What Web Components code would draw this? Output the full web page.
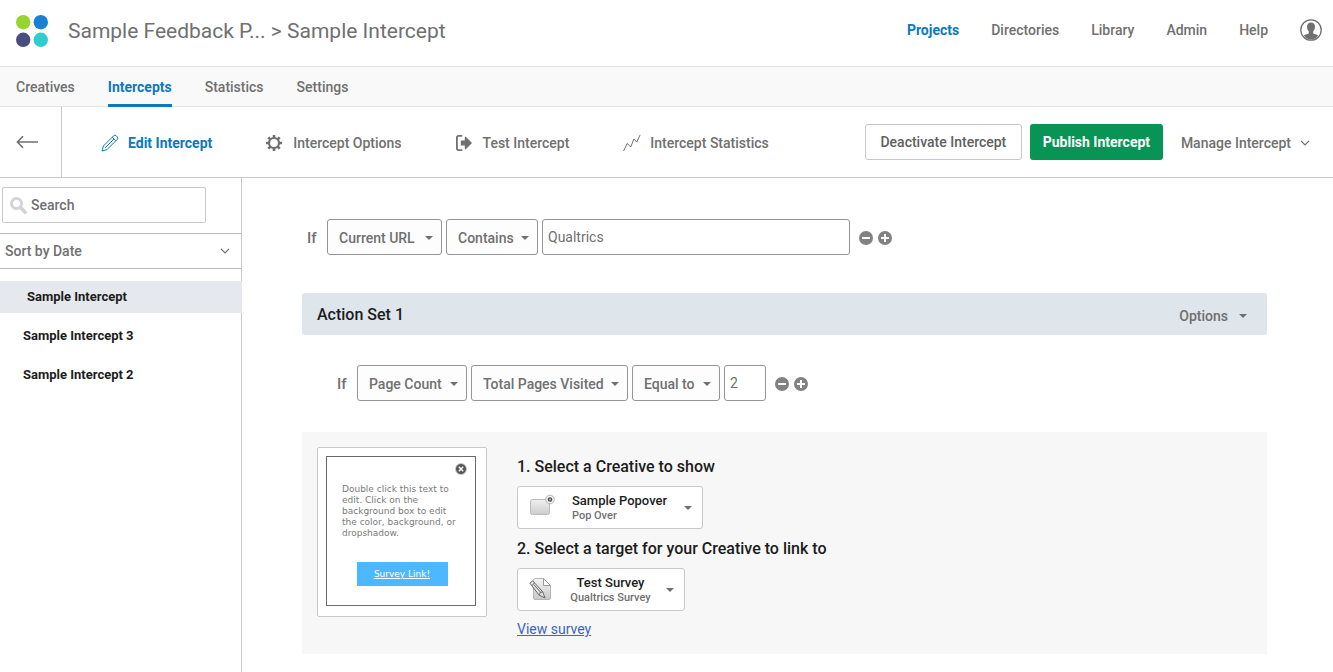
<!DOCTYPE html>
<html lang="en">
<head>
<meta charset="utf-8">
<meta name="viewport" content="width=device-width, initial-scale=1">
<title>Sample Intercept</title>
<style>
  body {
    margin: 0;
    min-height: 100vh;
    display: flex;
    flex-direction: column;
    background: #fff;
    color: #707070;
    font: 500 14px/20px Roboto, "Liberation Sans", sans-serif;
  }

  .workspace {
    flex: 1;
    display: flex;
  }

  main {
    flex: 1;
    min-width: 0;
    padding: 41px 66px 18px 60px;
  }
</style>
</head>
<body>
<app-header project="Sample Feedback P..." intercept="Sample Intercept"></app-header>
<app-tabs></app-tabs>
<intercept-toolbar></intercept-toolbar>
<div class="workspace">
  <intercept-list></intercept-list>
  <main>
    <condition-row>
      <drop-select label="Condition type" value="Current URL" style="--width: 115px"></drop-select>
      <drop-select label="Operator" value="Contains" style="--width: 92px"></drop-select>
      <value-input label="URL value" value="Qualtrics" style="--width: 308px"></value-input>
    </condition-row>
    <action-set name="Action Set 1">
      <condition-row slot="condition">
        <drop-select label="Condition type" value="Page Count" style="--width: 110px"></drop-select>
        <drop-select label="Metric" value="Total Pages Visited" style="--width: 157px"></drop-select>
        <drop-select label="Operator" value="Equal to" style="--width: 88px"></drop-select>
        <value-input label="Page count" value="2" style="--width: 42px"></value-input>
      </condition-row>
      <creative-preview slot="preview"></creative-preview>
      <asset-picker heading="1. Select a Creative to show" name="Sample Popover" kind="Pop Over" icon="popover" style="--width: 186px"></asset-picker>
      <asset-picker heading="2. Select a target for your Creative to link to" name="Test Survey" kind="Qualtrics Survey" icon="survey" style="--width: 168px"></asset-picker>
    </action-set>
  </main>
</div>

<script>
const ICONS = {
  logo: [32, 32, `
    <circle cx="7.2" cy="7.2" r="7.2" fill="#96d52f"/>
    <circle cx="24.8" cy="7.2" r="7.2" fill="#1a80d3"/>
    <circle cx="7.2" cy="24.8" r="7.2" fill="#474f80"/>
    <circle cx="24.8" cy="24.8" r="7.2" fill="#31ccd1"/>`],
  user: [22, 22, `
    <circle cx="11" cy="11" r="10.2" fill="none" stroke="currentColor" stroke-width="1.3"/>
    <path fill="currentColor" d="M11 3.6c2.6 0 4 1.7 4 4.2 0 2.3-.8 3.7-1.8 4.7v1.9c2 .6 4.2 1.2 5 2.4A9.6 9.6 0 0 1 11 20.6a9.6 9.6 0 0 1-7.2-3.8c.8-1.2 3-1.8 5-2.4v-1.9C7.8 11.500 7 10.100 7 7.800c0-2.500 1.400-4.200 4-4.200z"/>`],
  back: [22, 14, `<path fill="none" stroke="currentColor" stroke-width="1.6" d="M7 1.2 1.400 7 7 12.800M1.400 7H22"/>`],
  pencil: [18, 18, `
    <path fill="none" stroke="currentColor" stroke-linejoin="round" d="M1 17l1.400-5L12.700 1.700a1.700 1.700 0 0 1 2.400 0l1.200 1.200a1.700 1.700 0 0 1 0 2.400L6 15.600zM11.200 3.200l3.600 3.600M4.200 13.800l8.800-8.800"/>`],
  gear: [16, 16, `
    <circle cx="8" cy="8" r="5" fill="none" stroke="currentColor" stroke-width="2.200"/>
    <path stroke="currentColor" stroke-width="2.600" d="M8 0v3M8 13v3M0 8h3M13 8h3M2.300 2.300l2.200 2.200M11.500 11.500l2.200 2.200M13.700 2.300l-2.200 2.200M4.500 11.500l-2.200 2.200"/>`],
  exit: [16, 16, `
    <path fill="none" stroke="currentColor" stroke-width="1.800" d="M6.200.9H2.400a1.500 1.500 0 0 0-1.500 1.500v11.200a1.500 1.500 0 0 0 1.500 1.500h3.800"/>
    <path fill="currentColor" d="M4.800 5.500h4V1.800h1L16 8l-6.200 6.200h-1v-3.700h-4z"/>`],
  chart: [18, 18, `<path fill="none" stroke="currentColor" stroke-linejoin="round" d="M.6 17 4.200 9.400 7.700 13l3.200-8 2.800 3L17.200.8"/>`],
  search: [17, 17, `
    <circle cx="6.500" cy="6.500" r="5" fill="none" stroke="#d3d3d3" stroke-width="3"/>
    <path stroke="#d3d3d3" stroke-width="3.400" stroke-linecap="round" d="M11 11l4.200 4.200"/>`],
  chevron: [10, 6, `<path fill="none" stroke="currentColor" stroke-width="1.200" d="M1 .8 5 4.900 9 .8"/>`],
  caret: [8, 4, `<path fill="currentColor" d="M0 0h8L4 4z"/>`],
  minus: [14, 14, `<circle cx="7" cy="7" r="7" fill="#828282"/><path fill="#fff" d="M3 6h8v2H3z"/>`],
  plus: [14, 14, `<circle cx="7" cy="7" r="7" fill="#828282"/><path fill="#fff" d="M3 6h3V3h2v3h3v2H8v3H6V8H3z"/>`],
  close: [12, 12, `
    <circle cx="6" cy="6" r="5.500" fill="#555" stroke="#ccc"/>
    <path stroke="#fff" stroke-width="1.400" d="M3.800 3.800l4.400 4.400M8.200 3.800 3.800 8.200"/>`],
  popover: [26, 28, `
    <defs><linearGradient id="g" x2="0" y2="1"><stop stop-color="#f0f0f0"/><stop offset="1" stop-color="#ccc"/></linearGradient></defs>
    <rect x="1.500" y="5.500" width="19" height="15" rx="2" fill="url(#g)" stroke="#bbb"/>
    <circle cx="21" cy="5.500" r="4.300" fill="#f2f2f2" stroke="#b5b5b5"/>
    <circle cx="21" cy="5.500" r="1.700" fill="#aaa" stroke="#555" stroke-width="1.300"/>`],
  survey: [24, 24, `
    <defs><linearGradient id="g" x2="0" y2="1"><stop stop-color="#f4f4f4"/><stop offset="1" stop-color="#c8c8c8"/></linearGradient></defs>
    <path fill="url(#g)" stroke="#b5b5b5" d="M6 .5h8.500l7 7V20a1.500 1.500 0 0 1-1.500 1.500H6A1.500 1.500 0 0 1 4.500 20V2A1.500 1.500 0 0 1 6 .5z"/>
    <path fill="#fff" stroke="#999" d="M14.500.5v7h7z"/>
    <path fill="#e4e4e4" stroke="#666" stroke-linejoin="round" d="M.9 5.200 3.600 2.800 13.700 13.800 16 20l-6-3zM3 7.400 5.600 5M10 17l1.200-2.400 2.500-.8M5 7l7 7.600"/>`],
};

const icon = (name) => {
  const [w, h, body] = ICONS[name];
  return `<svg class="icon" width="${w}" height="${h}" viewBox="0 0 ${w} ${h}" aria-hidden="true">${body}</svg>`;
};

const BASE = `
  :host { display: block; }
  * { box-sizing: border-box; }
  .icon { display: block; flex: none; }
  a { color: inherit; text-decoration: none; }
  button, input, select {
    margin: 0;
    padding: 0;
    border: 0;
    background: none;
    color: inherit;
    font: inherit;
  }
  button { cursor: pointer; }
`;

class BaseElement extends HTMLElement {
  connectedCallback() {
    if (this.shadowRoot) return;
    this.attachShadow({ mode: "open" });
    this.shadowRoot.innerHTML = `<style>${BASE}${this.styles()}</style>${this.template()}`;
  }

  attr(name) {
    return this.getAttribute(name) || "";
  }
}

class AppHeader extends BaseElement {
  styles() {
    return `
      header {
        display: flex;
        align-items: center;
        height: 67px;
        padding: 0 11px 4px 16px;
        border-bottom: 1px solid #e4e4e4;
      }
      h1 {
        flex: 1;
        margin: 0 0 0 20px;
        font-size: 21px;
        line-height: 28px;
        font-weight: 400;
        white-space: nowrap;
      }
      nav { display: flex; align-items: center; gap: 32px; padding-bottom: 2px; }
      .current { color: #0b79bf; font-weight: 700; }
    `;
  }

  template() {
    const links = ["Projects", "Directories", "Library", "Admin", "Help"];
    return `
      <header>
        ${icon("logo")}
        <h1>${this.attr("project")} &gt; ${this.attr("intercept")}</h1>
        <nav aria-label="Main">
          ${links.map((l, i) => `<a href="#" class="${i ? "" : "current"}">${l}</a>`).join("")}
          <button type="button" aria-label="Account">${icon("user")}</button>
        </nav>
      </header>
    `;
  }
}

class AppTabs extends BaseElement {
  styles() {
    return `
      nav {
        display: flex;
        gap: 33px;
        height: 40px;
        padding: 0 16px;
        background: #f9f9f9;
        border-bottom: 1px solid #e4e4e4;
      }
      a { height: 40px; line-height: 40px; }
      .current {
        color: #0b79bf;
        font-weight: 700;
        border-bottom: 3px solid #0b79bf;
      }
    `;
  }

  template() {
    const tabs = ["Creatives", "Intercepts", "Statistics", "Settings"];
    return `
      <nav aria-label="Section">
        ${tabs.map((t) => `<a href="#" class="${t === "Intercepts" ? "current" : ""}">${t}</a>`).join("")}
      </nav>
    `;
  }
}

class InterceptToolbar extends BaseElement {
  styles() {
    return `
      .bar {
        display: flex;
        align-items: center;
        height: 71px;
        border-bottom: 1px solid #c8c8c8;
        white-space: nowrap;
      }
      .back {
        display: flex;
        align-items: center;
        align-self: stretch;
        width: 62px;
        padding-left: 16px;
        border-right: 1px solid #c8c8c8;
      }
      nav { flex: 1; display: flex; gap: 54px; padding: 2px 0 0 39px; }
      nav a { display: flex; align-items: center; gap: 9px; }
      .art { width: 18px; }
      .current { color: #0b79bf; font-weight: 700; }
      .actions { display: flex; align-items: center; gap: 8px; }
      .actions button { height: 36px; border-radius: 3px; }
      .outline { width: 157px; border: 1px solid #c8c8c8; color: #606060; }
      .publish { width: 133px; background: #079455; color: #fff; font-weight: 700; }
      .menu { display: flex; align-items: center; gap: 9px; padding: 2px 23px 0 10px; }
    `;
  }

  template() {
    return `
      <div class="bar">
        <a class="back" href="#" aria-label="Back">${icon("back")}</a>
        <nav aria-label="Intercept">
          <a href="#" class="current"><span class="art">${icon("pencil")}</span>Edit Intercept</a>
          <a href="#"><span class="art">${icon("gear")}</span>Intercept Options</a>
          <a href="#"><span class="art">${icon("exit")}</span>Test Intercept</a>
          <a href="#"><span class="art">${icon("chart")}</span>Intercept Statistics</a>
        </nav>
        <div class="actions">
          <button type="button" class="outline">Deactivate Intercept</button>
          <button type="button" class="publish">Publish Intercept</button>
          <button type="button" class="menu" aria-haspopup="menu">Manage Intercept${icon("chevron")}</button>
        </div>
      </div>
    `;
  }
}

class InterceptList extends BaseElement {
  styles() {
    return `
      :host { flex: none; width: 242px; box-sizing: border-box; border-right: 1px solid #c8c8c8; }
      .search {
        display: flex;
        align-items: center;
        gap: 4px;
        height: 36px;
        margin: 9px 35px 10px 2px;
        padding: 0 7px;
        border: 1px solid #c8c8c8;
        border-radius: 2px;
      }
      input { flex: 1; min-width: 0; outline: 0; }
      input::placeholder { color: inherit; opacity: 1; }
      .sort {
        display: grid;
        align-items: center;
        height: 36px;
        border: solid #b9b9b9;
        border-width: 1px 0;
      }
      .sort > * { grid-area: 1 / 1; }
      .sort .icon { justify-self: end; margin-right: 11px; pointer-events: none; }
      select { appearance: none; width: 100%; height: 34px; padding: 0 5px; }
      ul {
        display: grid;
        gap: 7px;
        margin: 12px -1px 0 0;
        padding: 0;
        list-style: none;
        color: #1c1c1c;
        font-size: 13px;
        font-weight: 700;
      }
      li a { display: block; padding: 0 23px; line-height: 32px; }
      .selected { padding-left: 27px; background: #e5e8ed; }
    `;
  }

  template() {
    return `
      <label class="search">${icon("search")}<input type="text" placeholder="Search" aria-label="Search"></label>
      <div class="sort">
        <select aria-label="Sort order"><option>Sort by Date</option></select>
        ${icon("chevron")}
      </div>
      <ul>
        <li><a href="#" class="selected">Sample Intercept</a></li>
        <li><a href="#">Sample Intercept 3</a></li>
        <li><a href="#">Sample Intercept 2</a></li>
      </ul>
    `;
  }
}

class DropSelect extends BaseElement {
  styles() {
    return `
      :host { width: var(--width); }
      div { display: grid; align-items: center; }
      div > * { grid-area: 1 / 1; }
      select {
        appearance: none;
        width: 100%;
        height: 36px;
        padding: 2px 11px 0;
        border: 1px solid #959595;
        border-radius: 3px;
        background: #fdfdfd;
      }
      .icon { justify-self: end; margin: 2px 9px 0 0; pointer-events: none; }
    `;
  }

  template() {
    return `
      <div>
        <select aria-label="${this.attr("label")}"><option>${this.attr("value")}</option></select>
        ${icon("caret")}
      </div>
    `;
  }
}

class ValueInput extends BaseElement {
  styles() {
    return `
      :host { width: var(--width); }
      input {
        display: block;
        width: 100%;
        height: 36px;
        padding: 0 5px;
        border: 1px solid #959595;
        border-radius: 3px;
        background: #fff;
        font-weight: 400;
      }
    `;
  }

  template() {
    return `<input type="text" aria-label="${this.attr("label")}" value="${this.attr("value")}">`;
  }
}

class ConditionRow extends BaseElement {
  styles() {
    return `
      :host { display: flex; align-items: center; gap: 4px; padding-left: 5px; }
      .if { width: 16px; padding-top: 2px; font-size: 15px; }
      .edit { display: flex; gap: 5px; padding: 2px 0 0 5px; }
    `;
  }

  template() {
    return `
      <span class="if">If</span>
      <slot></slot>
      <span class="edit">
        <button type="button" aria-label="Remove condition">${icon("minus")}</button>
        <button type="button" aria-label="Add condition">${icon("plus")}</button>
      </span>
    `;
  }
}

class ActionSet extends BaseElement {
  styles() {
    return `
      :host { margin-top: 38px; }
      header {
        display: flex;
        align-items: center;
        justify-content: space-between;
        height: 42px;
        padding: 2px 20px 0 15px;
        border-radius: 3px;
        background: #dee5eb;
      }
      h2 { margin: 0; color: #1c1c1c; font-size: 16px; font-weight: 500; }
      header button { display: flex; align-items: center; gap: 11px; padding-top: 2px; }
      .condition { padding: 30px 30px 31px; }
      .panel {
        display: flex;
        align-items: flex-start;
        gap: 30px;
        padding: 15px 15px 7px;
        background: #f7f7f7;
      }
      .view {
        display: inline-block;
        line-height: 36px;
        color: #3a66c0;
        font-weight: 400;
        text-decoration: underline;
      }
    `;
  }

  template() {
    return `
      <header>
        <h2>${this.attr("name")}</h2>
        <button type="button" aria-haspopup="menu">Options${icon("caret")}</button>
      </header>
      <div class="condition"><slot name="condition"></slot></div>
      <div class="panel">
        <slot name="preview"></slot>
        <div>
          <slot></slot>
          <a class="view" href="#">View survey</a>
        </div>
      </div>
    `;
  }
}

class CreativePreview extends BaseElement {
  styles() {
    return `
      :host {
        flex: none;
        box-sizing: border-box;
        width: 170px;
        height: 170px;
        padding: 8px 10px 10px 8px;
        border: 1px solid #c8c8c8;
        border-radius: 2px;
        background: #fff;
      }
      .box {
        position: relative;
        display: flex;
        flex-direction: column;
        align-items: center;
        justify-content: space-between;
        height: 150px;
        padding: 27px 13px 19px 15px;
        border: 1px solid #6b6b6b;
        color: #7b7b7b;
        font: 400 9px/11px "DejaVu Sans", sans-serif;
      }
      p { margin: 0; }
      .link {
        width: 91px;
        background: #4db8ff;
        color: #fff;
        line-height: 24px;
        text-align: center;
        text-decoration: underline;
      }
      .close { position: absolute; top: 6px; right: 8px; }
    `;
  }

  template() {
    return `
      <div class="box">
        <button type="button" class="close" aria-label="Close">${icon("close")}</button>
        <p>Double click this text to edit. Click on the background box to edit the color, background, or dropshadow.</p>
        <a class="link" href="#">Survey Link!</a>
      </div>
    `;
  }
}

class AssetPicker extends BaseElement {
  styles() {
    return `
      h3 { margin: 0; color: #1c1c1c; font-size: 16px; line-height: 39px; font-weight: 500; }
      button {
        display: flex;
        align-items: center;
        justify-content: space-between;
        width: var(--width);
        height: 43px;
        padding: 0 10px 0 11px;
        border: 1px solid #c8c8c8;
        border-radius: 3px;
        background: #fff;
      }
      .art { width: 26px; }
      .name, .kind { display: block; }
      .name { color: #1c1c1c; font-size: 13px; line-height: 16px; }
      .kind { font-size: 11px; line-height: 14px; text-align: left; }
    `;
  }

  template() {
    return `
      <h3>${this.attr("heading")}</h3>
      <button type="button" aria-haspopup="listbox">
        <span class="art">${icon(this.attr("icon"))}</span>
        <span><span class="name">${this.attr("name")}</span><span class="kind">${this.attr("kind")}</span></span>
        ${icon("caret")}
      </button>
    `;
  }
}

customElements.define("app-header", AppHeader);
customElements.define("app-tabs", AppTabs);
customElements.define("intercept-toolbar", InterceptToolbar);
customElements.define("intercept-list", InterceptList);
customElements.define("drop-select", DropSelect);
customElements.define("value-input", ValueInput);
customElements.define("condition-row", ConditionRow);
customElements.define("action-set", ActionSet);
customElements.define("creative-preview", CreativePreview);
customElements.define("asset-picker", AssetPicker);
</script>
</body>
</html>
